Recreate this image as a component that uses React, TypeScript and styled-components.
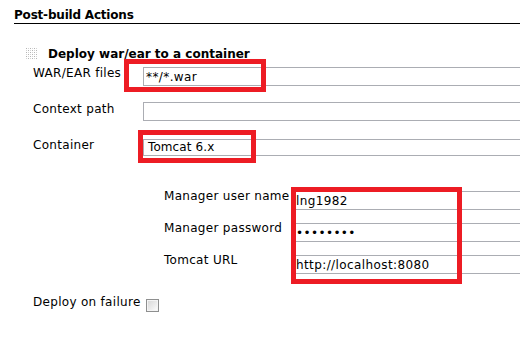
import React from "react";
import styled, { createGlobalStyle } from "styled-components";

const GlobalStyle = createGlobalStyle`
  html, body {
    margin: 0;
    padding: 0;
    background: #ffffff;
    overflow: hidden;
  }
  body {
    font-family: "DejaVu Sans", Verdana, sans-serif;
    font-size: 12px;
    color: #000000;
  }
`;

const Page = styled.div`
  width: 540px;
  padding: 8px 0 0 14px;
  box-sizing: border-box;
`;

const SectionHeader = styled.div`
  font-weight: bold;
  line-height: 15px;
  letter-spacing: -0.2px;
  border-bottom: 1px solid #000000;
`;

const Block = styled.section`
  margin-top: 23px;
`;

const TitleRow = styled.div`
  display: flex;
  align-items: flex-start;
  padding-left: 12px;
  line-height: 14px;
  font-weight: bold;
`;

const Grip = styled.svg`
  flex: none;
  width: 12px;
  height: 12px;
  margin: 1px 10px 0 0;
`;

const Rows = styled.div`
  padding-left: 19px;
  margin-top: 6px;
  display: flex;
  flex-direction: column;
`;

const Row = styled.div<{ $gap?: number; $labelWidth?: number }>`
  display: grid;
  grid-template-columns: ${(p) => p.$labelWidth ?? 110}px 1fr;
  align-items: start;
  margin-top: ${(p) => p.$gap ?? 0}px;
`;

const Label = styled.label<{ $shift?: number }>`
  line-height: 14px;
  letter-spacing: 0.3px;
  margin-top: ${(p) => p.$shift ?? -1}px;
  white-space: nowrap;
`;

const Field = styled.div`
  position: relative;
`;

const TextInput = styled.input`
  display: block;
  width: 100%;
  height: 19px;
  box-sizing: border-box;
  margin: 0;
  padding: 0 2px;
  border: 1px solid #abadb3;
  border-radius: 0;
  outline: none;
  background: #ffffff;
  font-family: "DejaVu Sans", Verdana, sans-serif;
  font-size: 12px;
  letter-spacing: 0.4px;
  line-height: 14px;
  color: #000000;
`;

const SelectBox = styled.div`
  height: 17px;
  box-sizing: border-box;
  border: 1px solid #abadb3;
  padding-left: 4px;
  line-height: 15px;
  letter-spacing: 0.1px;
  color: #000000;
`;

const SubBlock = styled.div`
  position: relative;
  margin-top: 35px;
  padding-left: 150px;
  display: flex;
  flex-direction: column;
`;

const FailureRow = styled.div`
  display: flex;
  align-items: flex-start;
  margin-top: 21px;
  padding-left: 19px;
  line-height: 14px;
  letter-spacing: 0.3px;
`;

const CheckBox = styled.span`
  display: inline-block;
  flex: none;
  width: 13px;
  height: 13px;
  box-sizing: border-box;
  margin: 4px 0 0 5px;
  border: 1px solid #8e8f8f;
  box-shadow: inset 0 0 0 1px #f4f4f4;
  background: linear-gradient(135deg, #d6d6d6 0%, #ededed 60%, #ffffff 100%);
`;

const Highlight = styled.div<{ $l: number; $t: number; $w: number; $h: number }>`
  position: absolute;
  left: ${(p) => p.$l}px;
  top: ${(p) => p.$t}px;
  width: ${(p) => p.$w}px;
  height: ${(p) => p.$h}px;
  box-sizing: border-box;
  border: 5px solid #ed1c24;
  pointer-events: none;
`;

function GripIcon() {
  const dots: React.ReactElement[] = [];
  for (let r = 0; r < 6; r++) {
    for (let c = 0; c < 6; c++) {
      dots.push(
        <rect
          key={`${r}-${c}`}
          x={c * 2}
          y={r * 2}
          width={1}
          height={1}
          fill={(r + c) % 2 === 0 ? "#b4b4b4" : "#d4d4d4"}
        />
      );
    }
  }
  return (
    <Grip viewBox="0 0 12 12" aria-hidden="true">
      {dots}
    </Grip>
  );
}

export default function App() {
  return (
    <>
      <GlobalStyle />
      <Page>
        <SectionHeader>Post-build Actions</SectionHeader>
        <Block>
          <TitleRow>
            <GripIcon />
            <span>Deploy war/ear to a container</span>
          </TitleRow>
          <Rows>
            <Row>
              <Label>WAR/EAR files</Label>
              <Field>
                <TextInput readOnly defaultValue="**/*.war" />
                <Highlight $l={-19} $t={-8} $w={142} $h={33} />
              </Field>
            </Row>
            <Row $gap={16}>
              <Label $shift={0}>Context path</Label>
              <Field>
                <TextInput readOnly defaultValue="" />
              </Field>
            </Row>
            <Row $gap={18}>
              <Label>Container</Label>
              <Field>
                <SelectBox>Tomcat 6.x</SelectBox>
                <Highlight $l={-5} $t={-9} $w={118} $h={33} />
              </Field>
            </Row>
          </Rows>
          <SubBlock>
            <Row $labelWidth={129}>
              <Label $shift={-2}>Manager user name</Label>
              <Field>
                <TextInput readOnly defaultValue="lng1982" />
              </Field>
            </Row>
            <Row $labelWidth={129} $gap={13}>
              <Label $shift={-2}>Manager password</Label>
              <Field>
                <TextInput type="password" readOnly defaultValue="password" />
              </Field>
            </Row>
            <Row $labelWidth={129} $gap={13}>
              <Label $shift={-2}>Tomcat URL</Label>
              <Field>
                <TextInput readOnly defaultValue="http://localhost:8080" />
              </Field>
            </Row>
            <Highlight $l={277} $t={-4} $w={171} $h={97} />
          </SubBlock>
          <FailureRow>
            <span>Deploy on failure</span>
            <CheckBox role="checkbox" aria-checked="false" />
          </FailureRow>
        </Block>
      </Page>
    </>
  );
}
